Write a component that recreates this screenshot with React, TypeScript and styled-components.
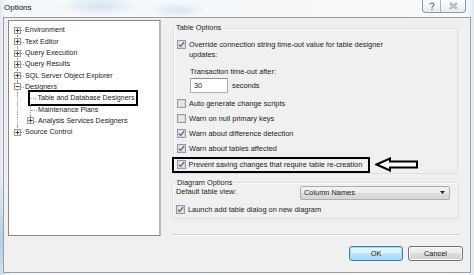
import styled, { createGlobalStyle } from "styled-components";

const GlobalStyle = createGlobalStyle`
	html, body {
		margin: 0;
		padding: 0;
	}
	body {
		width: 474px;
		height: 275px;
		overflow: hidden;
		font-family: "Liberation Sans", Arial, sans-serif;
		color: #1a1a1a;
	}
`;

const Window = styled.div`
	width: 474px;
	height: 275px;
	box-sizing: border-box;
	display: flex;
	flex-direction: column;
	background:
		radial-gradient(ellipse 42px 10px at 100px 6px, rgba(186, 212, 234, 0.55), transparent),
		radial-gradient(ellipse 30px 8px at 178px 10px, rgba(186, 212, 234, 0.5), transparent),
		radial-gradient(ellipse 14px 60px at 0px 240px, rgba(170, 204, 230, 0.9), transparent),
		linear-gradient(90deg, #dce8f2 0px, #f5f8fa 5px, #f7f9fb 466px, #e2ecf4 474px);
`;

const TitleBar = styled.div`
	height: 17px;
	flex: none;
	display: flex;
	justify-content: space-between;
	align-items: flex-start;
	padding-left: 4px;
`;

const Title = styled.span`
	font-size: 8px;
	line-height: 10px;
	margin-top: 3px;
	color: #111;
`;

const CaptionGroup = styled.div`
	display: flex;
	height: 12px;
	margin-right: 8px;
	border: 1px solid #8d99a6;
	border-top: none;
	border-radius: 0 0 4px 4px;
	overflow: hidden;
	background: linear-gradient(#fdfdfd, #e8edf2);
`;

const CaptionButton = styled.div<{ $w: number }>`
	width: ${(p) => p.$w}px;
	display: flex;
	align-items: center;
	justify-content: center;
	& + & {
		border-left: 1px solid #a9b3bd;
	}
`;

const Content = styled.div`
	flex: 1;
	margin: 0 3px 2px 3px;
	border: 1px solid #9c9c9c;
	background: #f0f0f0;
	display: flex;
	flex-direction: column;
	padding: 2px 0 11px 4px;
	min-height: 0;
`;

const Main = styled.div`
	height: 216px;
	display: flex;
	gap: 11px;
	padding-right: 9px;
`;

const Tree = styled.div`
	width: 153px;
	flex: none;
	box-sizing: border-box;
	border: 1px solid #828790;
	border-right: 2px solid #b9b9b9;
	background: #fff;
	padding: 3.8px 0 0 2px;
	font-size: 7.1px;
	color: #222;
`;

const TreeRow = styled.div`
	height: 11.3px;
	display: flex;
	align-items: center;
	white-space: nowrap;
`;

type Line = "full" | "top" | "bottom" | "none";

const Gutter = styled.span<{ $v: Line; $h?: boolean }>`
	position: relative;
	flex: none;
	width: 13px;
	align-self: stretch;
	display: flex;
	align-items: center;
	justify-content: center;
	&::before {
		content: "";
		position: absolute;
		left: 6px;
		top: ${(p) => (p.$v === "bottom" ? "50%" : "0")};
		bottom: ${(p) => (p.$v === "top" ? "50%" : "0")};
		border-left: 1px dotted #a0a0a0;
		display: ${(p) => (p.$v === "none" ? "none" : "block")};
	}
	&::after {
		content: "";
		position: absolute;
		left: 7px;
		right: 0;
		top: 50%;
		border-top: 1px dotted #a0a0a0;
		display: ${(p) => (p.$h ? "block" : "none")};
	}
`;

const TreeLabel = styled.span`
	margin-left: 1px;
`;

const TreeHighlight = styled.span`
	display: flex;
	align-items: center;
	box-sizing: border-box;
	height: 16px;
	margin-left: 4px;
	border: 2.5px solid #000;
	padding-right: 1.5px;
`;

const Dash = styled.span`
	width: 5px;
	margin-left: 0.5px;
	margin-right: 1px;
	border-top: 1px dotted #a0a0a0;
`;

const RightColumn = styled.div`
	flex: 1;
	display: flex;
	flex-direction: column;
	padding-top: 3px;
	font-size: 7.4px;
`;

const Group = styled.fieldset`
	margin: 0 3px 0 1px;
	padding: 0 0 0 3px;
	border: 1px solid #d5dfe5;
	border-radius: 3px;
	box-shadow: inset 1px 1px 0 #fff;
	min-width: 0;
`;

const DiagramGroup = styled(Group)`
	margin: 4px 2px 0 0;
	padding: 0 0 1px 3px;
`;

const Legend = styled.legend<{ $shift?: number }>`
	padding: 0 1px;
	margin-left: ${(p) => p.$shift ?? 0}px;
	line-height: 10px;
	font-size: 7.4px;
`;

const WrapOption = styled.div`
	display: flex;
	align-items: flex-start;
	gap: 3px;
	margin-top: 6.5px;
	line-height: 10px;
`;

const WrapText = styled.span`
	max-width: 205px;
`;

const Option = styled.div<{ $gap?: number }>`
	display: flex;
	align-items: center;
	gap: 3px;
	height: 15.25px;
	margin-top: ${(p) => p.$gap ?? 0}px;
`;

const Indent = styled.div`
	padding-left: 13px;
`;

const TimeoutLabel = styled.div`
	margin-top: 7px;
	line-height: 10px;
`;

const TimeoutRow = styled.div`
	display: flex;
	align-items: center;
	gap: 4px;
	margin-top: 1.5px;
`;

const TextBox = styled.div`
	width: 38px;
	height: 15px;
	box-sizing: border-box;
	border: 1px solid #abadb3;
	border-top-color: #8e8f94;
	background: #fff;
	padding-left: 3px;
	line-height: 13px;
`;

const OptionList = styled.div`
	margin-top: 2.4px;
`;

const BoxedRow = styled.div`
	display: flex;
	align-items: center;
	gap: 5px;
	margin-top: 0.5px;
`;

const Boxed = styled.div`
	display: flex;
	align-items: center;
	gap: 3px;
	box-sizing: border-box;
	height: 16px;
	margin-left: -5px;
	border: 2.5px solid #000;
	padding: 0 5.5px 0 2.5px;
`;

const ViewRow = styled.div`
	display: flex;
	align-items: center;
	justify-content: space-between;
	height: 14px;
	margin-top: -2px;
	padding-right: 8px;
`;

const ViewLabel = styled.span`
	margin-top: -2px;
`;

const Dropdown = styled.div`
	width: 150px;
	height: 14px;
	box-sizing: border-box;
	border: 1px solid #acacac;
	border-radius: 2px;
	background: linear-gradient(#f3f3f3, #ebebeb 50%, #dddddd 50%, #d6d6d6);
	display: flex;
	align-items: center;
	justify-content: space-between;
	padding: 0 4px 0 3px;
`;

const Separator = styled.div`
	margin-top: auto;
	border-top: 1px solid #d5d5d5;
	border-bottom: 1px solid #fff;
`;

const Footer = styled.div`
	display: flex;
	justify-content: flex-end;
	gap: 5px;
	margin-top: 10px;
	padding-right: 7px;
	font-size: 7.4px;
`;

const Button = styled.div<{ $default?: boolean; $w: number }>`
	width: ${(p) => p.$w}px;
	height: 15px;
	box-sizing: border-box;
	border-radius: 3px;
	display: flex;
	align-items: center;
	justify-content: center;
	border: 1px solid ${(p) => (p.$default ? "#3c7fb1" : "#707070")};
	box-shadow: ${(p) =>
		p.$default ? "inset 0 0 0 1px #9fdcfb" : "inset 0 0 0 1px #fbfbfb"};
	background: ${(p) =>
		p.$default
			? "linear-gradient(#eaf6fd, #d9f0fc 50%, #bee6fd 50%, #a7d9f5)"
			: "linear-gradient(#f2f2f2, #ebebeb 50%, #dddddd 50%, #cfcfcf)"};
`;

const Expander = ({ open }: { open?: boolean }) => (
	<svg width="7" height="7" viewBox="0 0 7 7" style={{ position: "relative", zIndex: 1 }}>
		<rect x="0.5" y="0.5" width="6" height="6" fill="#fafafa" stroke="#9a9a9a" />
		<line x1="1.5" y1="3.5" x2="5.5" y2="3.5" stroke="#444" strokeWidth="1" />
		{!open && <line x1="3.5" y1="1.5" x2="3.5" y2="5.5" stroke="#444" strokeWidth="1" />}
	</svg>
);

const CheckBox = ({ checked }: { checked?: boolean }) => (
	<svg width="9" height="9" viewBox="0 0 9 9" style={{ flex: "none" }}>
		<rect x="0.5" y="0.5" width="8" height="8" fill="#f6f6f6" stroke="#999a9a" />
		<rect x="1.5" y="1.5" width="6" height="6" fill="#e6e8eb" stroke="#c8ccd1" strokeWidth="0.6" />
		{checked && (
			<path d="M2 4.6 L3.7 6.4 L7.1 2.1" fill="none" stroke="#3a5b92" strokeWidth="1.2" />
		)}
	</svg>
);

const HelpGlyph = () => (
	<svg width="6" height="9" viewBox="0 0 6 9">
		<path d="M1 2.6 C1 0.6 5 0.6 5 2.6 C5 4.1 3 4 3 5.8" fill="none" stroke="#6f7a86" strokeWidth="1.2" />
		<rect x="2.3" y="6.8" width="1.4" height="1.4" fill="#6f7a86" />
	</svg>
);

const CloseGlyph = () => (
	<svg width="9" height="8" viewBox="0 0 9 8">
		<path d="M1 1 L8 7 M8 1 L1 7" stroke="#8a949e" strokeWidth="2.2" />
		<path d="M1 1 L8 7 M8 1 L1 7" stroke="#f4f6f8" strokeWidth="0.8" />
	</svg>
);

const Arrow = () => (
	<svg width="44" height="15" viewBox="0 0 44 15">
		<polygon
			points="1.5,7.5 15,1.5 15,4.5 42,4.5 42,10.5 15,10.5 15,13.5"
			fill="#fff"
			stroke="#000"
			strokeWidth="2"
			strokeLinejoin="miter"
		/>
	</svg>
);

const roots: { label: string; v: Line }[] = [
	{ label: "Environment", v: "bottom" },
	{ label: "Text Editor", v: "full" },
	{ label: "Query Execution", v: "full" },
	{ label: "Query Results", v: "full" },
	{ label: "SQL Server Object Explorer", v: "full" },
];

const options = [
	{ label: "Auto generate change scripts", checked: false },
	{ label: "Warn on null primary keys", checked: false },
	{ label: "Warn about difference detection", checked: true },
	{ label: "Warn about tables affected", checked: true },
];

export default function App() {
	return (
		<>
			<GlobalStyle />
			<Window>
				<TitleBar>
					<Title>Options</Title>
					<CaptionGroup>
						<CaptionButton $w={17}>
							<HelpGlyph />
						</CaptionButton>
						<CaptionButton $w={24}>
							<CloseGlyph />
						</CaptionButton>
					</CaptionGroup>
				</TitleBar>
				<Content>
					<Main>
						<Tree>
							{roots.map((r) => (
								<TreeRow key={r.label}>
									<Gutter $v={r.v} $h>
										<Expander />
									</Gutter>
									<TreeLabel>{r.label}</TreeLabel>
								</TreeRow>
							))}
							<TreeRow>
								<Gutter $v="full" $h>
									<Expander open />
								</Gutter>
								<TreeLabel>Designers</TreeLabel>
							</TreeRow>
							<TreeRow>
								<Gutter $v="full" />
								<TreeHighlight>
									<Dash />
									<TreeLabel>Table and Database Designers</TreeLabel>
								</TreeHighlight>
							</TreeRow>
							<TreeRow>
								<Gutter $v="full" />
								<Gutter $v="full" $h />
								<TreeLabel>Maintenance Plans</TreeLabel>
							</TreeRow>
							<TreeRow>
								<Gutter $v="full" />
								<Gutter $v="top" $h>
									<Expander />
								</Gutter>
								<TreeLabel>Analysis Services Designers</TreeLabel>
							</TreeRow>
							<TreeRow>
								<Gutter $v="top" $h>
									<Expander />
								</Gutter>
								<TreeLabel>Source Control</TreeLabel>
							</TreeRow>
						</Tree>
						<RightColumn>
							<Group>
								<Legend $shift={-2}>Table Options</Legend>
								<WrapOption>
									<span style={{ marginTop: 0.5 }}>
										<CheckBox checked />
									</span>
									<WrapText>
										Override connection string time-out value for table designer updates:
									</WrapText>
								</WrapOption>
								<Indent>
									<TimeoutLabel>Transaction time-out after:</TimeoutLabel>
									<TimeoutRow>
										<TextBox>30</TextBox>
										<span>seconds</span>
									</TimeoutRow>
								</Indent>
								<OptionList>
									{options.map((o) => (
										<Option key={o.label}>
											<CheckBox checked={o.checked} />
											<span>{o.label}</span>
										</Option>
									))}
								</OptionList>
								<BoxedRow>
									<Boxed>
										<CheckBox checked />
										<span>Prevent saving changes that require table re-creation</span>
									</Boxed>
									<Arrow />
								</BoxedRow>
							</Group>
							<DiagramGroup>
								<Legend>Diagram Options</Legend>
								<ViewRow>
									<ViewLabel>Default table view:</ViewLabel>
									<Dropdown>
										<span>Column Names</span>
										<svg width="5" height="3" viewBox="0 0 5 3">
											<polygon points="0,0 5,0 2.5,3" fill="#222" />
										</svg>
									</Dropdown>
								</ViewRow>
								<Option $gap={2}>
									<CheckBox checked />
									<span>Launch add table dialog on new diagram</span>
								</Option>
							</DiagramGroup>
							<Separator />
						</RightColumn>
					</Main>
					<Footer>
						<Button $default $w={54}>
							OK
						</Button>
						<Button $w={55}>Cancel</Button>
					</Footer>
				</Content>
			</Window>
		</>
	);
}
